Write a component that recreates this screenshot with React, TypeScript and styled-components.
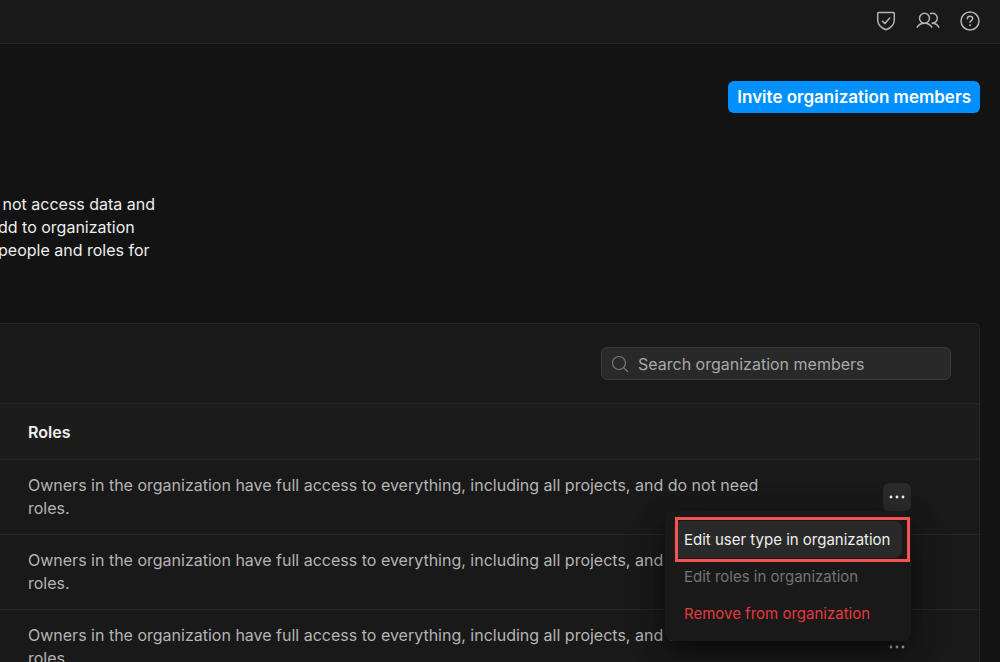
import React from "react";
import styled, { createGlobalStyle, css } from "styled-components";

const GlobalStyle = createGlobalStyle`
  *, *::before, *::after { box-sizing: border-box; }
  html, body { height: 100%; }
  body {
    margin: 0;
    overflow: hidden;
    background: #131313;
    color: #eeeeee;
    font-family: Inter, "Liberation Sans", sans-serif;
    font-size: 16px;
    line-height: 23px;
  }
  button, input { font: inherit; }
`;

const TopBar = styled.header`
  display: flex;
  align-items: center;
  justify-content: flex-end;
  gap: 14px;
  height: 44px;
  padding: 0 16px 2px;
  background: #191919;
  border-bottom: 1px solid #262626;
`;

const IconButton = styled.button`
  display: flex;
  align-items: center;
  justify-content: center;
  width: 28px;
  height: 28px;
  padding: 0;
  border: 0;
  border-radius: 6px;
  background: transparent;
  color: #b4b4b4;
`;

const Page = styled.main`
  padding: 37px 20px 0 0;
`;

const Actions = styled.div`
  display: flex;
  justify-content: flex-end;
`;

const InviteButton = styled.button`
  height: 32px;
  padding: 0 9px;
  border: 0;
  border-radius: 6px;
  background: #0090ff;
  color: #ffffff;
  font-size: 17px;
  font-weight: 600;
`;

const Intro = styled.p`
  margin: 80px 0 61px -2px;
  white-space: pre;
`;

const Panel = styled.section`
  border: solid #262626;
  border-width: 1px 1px 0 0;
  border-radius: 0 6px 0 0;
  background: #191919;
`;

const PanelTools = styled.div`
  display: flex;
  justify-content: flex-end;
  padding: 23px 28px;
`;

const SearchBox = styled.label`
  display: flex;
  align-items: center;
  gap: 9px;
  width: 350px;
  height: 33px;
  padding: 0 9px;
  border: 1px solid #3a3a3a;
  border-radius: 6px;
  background: #292929;
  color: #7b7b7b;
`;

const SearchInput = styled.input`
  flex: 1;
  min-width: 0;
  padding: 2px 0 0;
  border: 0;
  outline: 0;
  background: transparent;
  color: #eeeeee;
  &::placeholder { color: #a8a8a8; opacity: 1; }
`;

const Table = styled.table`
  width: 100%;
  border-collapse: collapse;
  text-align: left;
`;

const HeadRow = styled.tr`
  height: 56px;
  background: #1c1c1c;
  border-top: 1px solid #262626;
`;

const HeadCell = styled.th`
  padding: 2px 28px 0;
  font-weight: 600;
`;

const Row = styled.tr`
  height: 75px;
  border-top: 1px solid #262626;
`;

const RoleCell = styled.td`
  padding: 0 28px;
  color: #b4b4b4;
`;

const RoleText = styled.div`
  max-width: 760px;
`;

const MenuCell = styled.td`
  width: 124px;
  padding: 0 28px;
`;

const MenuAnchor = styled.div`
  position: relative;
  width: 28px;
`;

const MoreButton = styled(IconButton)<{ $open?: boolean }>`
  ${(p) => p.$open && css`
    background: #2a2a2a;
    color: #eeeeee;
  `}
`;

const Menu = styled.div`
  position: absolute;
  z-index: 1;
  top: 28px;
  right: 0;
  width: 246px;
  padding: 10px 9px 9px;
  border-radius: 8px;
  background: #191919;
  box-shadow: 0 12px 32px -8px rgba(0, 0, 0, 0.7), 0 8px 24px rgba(0, 0, 0, 0.25);
`;

const MenuItem = styled.button<{ $tone: "active" | "muted" | "danger" }>`
  display: block;
  width: 100%;
  height: 37px;
  padding: 0 10px;
  border: 0;
  border-radius: 8px;
  background: ${(p) => (p.$tone === "active" ? "#292929" : "transparent")};
  color: ${(p) => ({ active: "#eeeeee", muted: "#747474", danger: "#e5383d" })[p.$tone]};
  font-size: 15px;
  text-align: left;
  white-space: nowrap;
`;

const Highlight = styled.div`
  position: absolute;
  top: 6px;
  right: 1px;
  width: 235px;
  height: 45px;
  border: 3px solid #f55353;
  pointer-events: none;
`;

const stroke = {
  fill: "none",
  stroke: "currentColor",
  strokeWidth: 1.5,
  strokeLinecap: "round" as const,
  strokeLinejoin: "round" as const,
  "aria-hidden": true,
};

const ShieldIcon = () => (
  <svg width="24" height="24" viewBox="0 0 24 24" {...stroke}>
    <path d="M4.500 3.500h15a.8.8 0 0 1 .8.8v6.600c0 4.300-3 7.700-8.300 9.900-5.300-2.200-8.300-5.600-8.300-9.900V4.300a.8.8 0 0 1 .8-.8Z" />
    <path d="m8.500 12.200 2.500 2.400 4.700-5.600" />
  </svg>
);

const PeopleIcon = () => (
  <svg width="26" height="24" viewBox="0 0 26 24" {...stroke}>
    <circle cx="9.500" cy="9.200" r="5" />
    <path d="M2.200 18.200c1.400-2.500 4.100-4 7.300-4s5.900 1.500 7.300 4" />
    <path d="M15.600 4.500a5 5 0 1 1 1.600 9.700c2.900 0 5.300 1.500 6.600 4" />
  </svg>
);

const HelpIcon = () => (
  <svg width="24" height="24" viewBox="0 0 24 24" {...stroke}>
    <circle cx="12" cy="12" r="9" />
    <path d="M9.400 9.700c0-1.500 1.200-2.400 2.600-2.400s2.700.9 2.700 2.300c0 1.900-2.700 1.900-2.700 3.700" />
    <circle cx="12" cy="16.200" r="0.600" fill="currentColor" strokeWidth="0.800" />
  </svg>
);

const SearchIcon = () => (
  <svg width="18" height="18" viewBox="0 0 18 18" {...stroke} strokeWidth={1.2}>
    <circle cx="8" cy="8" r="6.500" />
    <path d="m12.600 12.600 4 3.900" />
  </svg>
);

const DotsIcon = () => (
  <svg width="18" height="18" viewBox="0 0 18 18" fill="currentColor" aria-hidden="true">
    <circle cx="3" cy="9" r="1.400" />
    <circle cx="9" cy="9" r="1.400" />
    <circle cx="15" cy="9" r="1.400" />
  </svg>
);

const ownerRole =
  "Owners in the organization have full access to everything, including all projects, and do not need roles.";

const members = [
  { id: 1, open: true },
  { id: 2, open: false },
  { id: 3, open: false },
];

export default function App() {
  return (
    <>
      <GlobalStyle />
      <TopBar>
        <IconButton aria-label="Security"><ShieldIcon /></IconButton>
        <IconButton aria-label="Members"><PeopleIcon /></IconButton>
        <IconButton aria-label="Help"><HelpIcon /></IconButton>
      </TopBar>
      <Page>
        <Actions>
          <InviteButton>Invite organization members</InviteButton>
        </Actions>
        <Intro>{" not access data and\ndd to organization\npeople and roles for"}</Intro>
        <Panel>
          <PanelTools>
            <SearchBox>
              <SearchIcon />
              <SearchInput type="text" aria-label="Search organization members" placeholder="Search organization members" />
            </SearchBox>
          </PanelTools>
          <Table>
            <thead>
              <HeadRow>
                <HeadCell scope="col">Roles</HeadCell>
                <HeadCell as="td" />
              </HeadRow>
            </thead>
            <tbody>
              {members.map((m) => (
                <Row key={m.id}>
                  <RoleCell><RoleText>{ownerRole}</RoleText></RoleCell>
                  <MenuCell>
                    <MenuAnchor>
                      <MoreButton $open={m.open} aria-label="More actions"><DotsIcon /></MoreButton>
                      {m.open && (
                        <Menu>
                          <MenuItem $tone="active">Edit user type in organization</MenuItem>
                          <MenuItem $tone="muted">Edit roles in organization</MenuItem>
                          <MenuItem $tone="danger">Remove from organization</MenuItem>
                          <Highlight />
                        </Menu>
                      )}
                    </MenuAnchor>
                  </MenuCell>
                </Row>
              ))}
            </tbody>
          </Table>
        </Panel>
      </Page>
    </>
  );
}
